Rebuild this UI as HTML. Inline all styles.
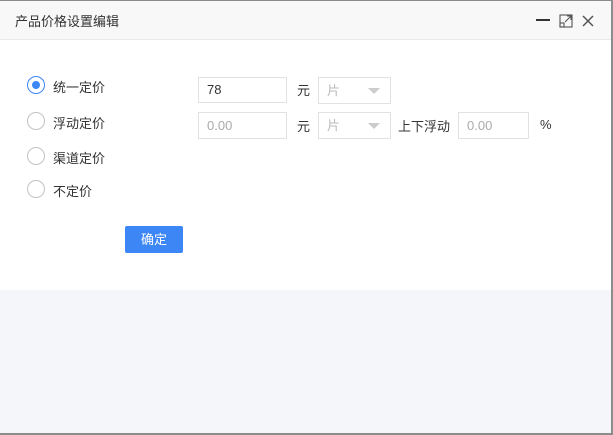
<!DOCTYPE html>
<html><head><meta charset="utf-8"><style>
body{margin:0;width:613px;height:435px;background:#8c8c8c;position:relative;overflow:hidden;font-family:"Liberation Sans","Noto Sans CJK SC",sans-serif;font-size:13px;color:#333}
.dlg{position:absolute;left:0;top:1px;width:611px;height:432px;background:#f4f6fa}
.title{position:absolute;left:0;top:0;width:611px;height:38px;background:#f8f8f8;border-bottom:1px solid #e8e8e8}
.title span{position:absolute;left:15px;top:10px;font-size:13px;color:#333}
.body{position:absolute;left:0;top:39px;width:611px;height:250px;background:#fff}
.a{position:absolute}
.radio{position:absolute;width:16px;height:16px;border:1px solid #c2c2c2;border-radius:50%;background:#fff}
.radio.on{border-color:#3c87f5}
.radio.on:after{content:"";position:absolute;left:4px;top:4px;width:8px;height:8px;border-radius:50%;background:#3c87f5}
.inp{position:absolute;height:25px;border:1px solid #e2e2e2;background:#fff;box-sizing:border-box;padding-left:8px;line-height:23px;font-size:13px}
.sel{position:absolute;height:27px;width:73px;border:1px solid #e2e2e2;box-sizing:border-box;color:#bbb;padding-left:8px;line-height:25px}
.sel:after{content:"";position:absolute;right:10px;top:10px;border-left:6px solid transparent;border-right:6px solid transparent;border-top:6px solid #ccc}
.btn{position:absolute;left:125px;top:226px;width:58px;height:27px;background:#3d86f5;border-radius:2px;color:#fff;text-align:center;line-height:27px;font-size:13px}
</style></head><body>
<div class="dlg">
<div class="title"><span>产品价格设置编辑</span>
<div class="a" style="left:536px;top:18px;width:14px;height:2px;background:#333"></div>
<svg class="a" style="left:559px;top:13px" width="14" height="14" viewBox="0 0 14 14" fill="none" stroke="#555" stroke-width="1.1"><rect x="1" y="1" width="12" height="12"/><rect x="1" y="9" width="4" height="4"/><path d="M6 8l6-6M8 2h4v4"/></svg>
<svg class="a" style="left:582px;top:14px" width="12" height="12" viewBox="0 0 12 12" stroke="#555" stroke-width="1.5"><path d="M1 1l10 10M11 1L1 11"/></svg>
</div>
<div class="body"></div>
</div>
<div class="radio on" style="left:27px;top:76px"></div><div class="a" style="left:53px;top:77px">统一定价</div>
<div class="radio" style="left:27px;top:112px"></div><div class="a" style="left:53px;top:113px">浮动定价</div>
<div class="radio" style="left:27px;top:147px"></div><div class="a" style="left:53px;top:148px">渠道定价</div>
<div class="radio" style="left:27px;top:180px"></div><div class="a" style="left:53px;top:181px">不定价</div>
<div class="inp" style="left:198px;top:77px;width:89px;height:26px;line-height:24px">78</div>
<div class="a" style="left:297px;top:80px">元</div>
<div class="sel" style="left:318px;top:77px">片</div>
<div class="inp" style="left:198px;top:112px;width:89px;height:27px;line-height:25px;color:#aaa">0.00</div>
<div class="a" style="left:297px;top:116px">元</div>
<div class="sel" style="left:318px;top:112px">片</div>
<div class="a" style="left:398px;top:116px">上下浮动</div>
<div class="inp" style="left:458px;top:112px;width:71px;height:27px;line-height:25px;color:#aaa">0.00</div>
<div class="a" style="left:540px;top:117px">%</div>
<div class="btn">确定</div>
</body></html>
